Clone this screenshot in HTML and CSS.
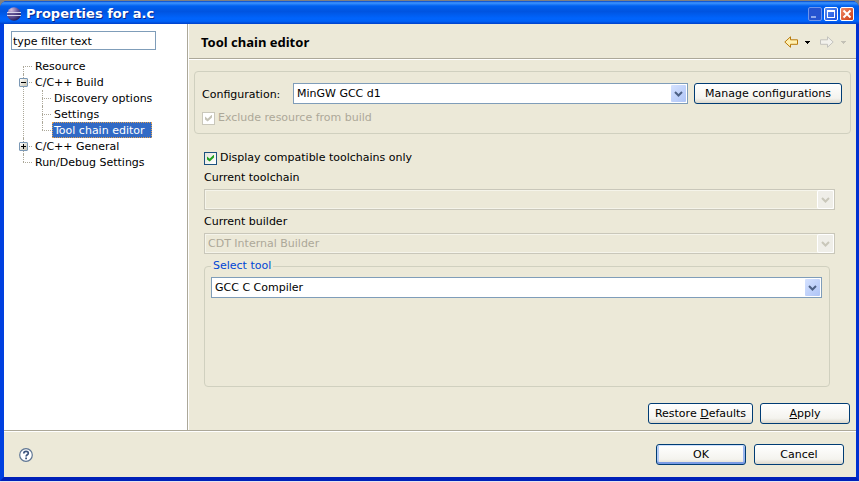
FILE: index.html
```html
<!DOCTYPE html>
<html lang="en">
<head>
<meta charset="utf-8">
<title>Properties for a.c</title>
<link rel="stylesheet" href="styles.css">
</head>
<body>
<div class="window">
  <header class="titlebar">
    <svg class="logo" width="16" height="16" viewBox="0 0 16 16" aria-hidden="true">
      <defs>
        <radialGradient id="globe" cx=".3" cy=".2" r=".9"><stop offset="0" stop-color="#d3bfdc"/><stop offset=".5" stop-color="#6d5b9f"/><stop offset="1" stop-color="#1b1650"/></radialGradient>
      </defs>
      <circle cx="8" cy="8" r="6.800" fill="url(#globe)"/>
      <path d="M1 6.500h14M1 9.500h14" stroke="#d8d4ea" stroke-width="1"/>
      <path d="M2 8h12.500" stroke="#35296f" stroke-width="1"/>
    </svg>
    <h1 class="title">Properties for a.c</h1>
    <div class="controls">
      <button class="control minimize" aria-label="Minimize" disabled><svg width="12" height="12" viewBox="0 0 12 12"><path d="M2 8h5v2H2z" fill="#8fa9ec"/></svg></button>
      <button class="control" aria-label="Maximize"><svg width="12" height="12" viewBox="0 0 12 12"><path d="M2 2h8v8H2zM3 4v5h6V4z" fill="#fff" fill-rule="evenodd"/></svg></button>
      <button class="control close" aria-label="Close"><svg width="12" height="12" viewBox="0 0 12 12"><path d="M2.500 2.500l7 7M9.500 2.500l-7 7" stroke="#fff" stroke-width="2"/></svg></button>
    </div>
  </header>
  <main class="content">
    <nav class="sidebar">
      <input class="filter" type="text" value="type filter text" aria-label="Filter">
      <ul class="tree">
        <li><span class="item">Resource</span></li>
        <li><button class="toggle minus" aria-label="Collapse C/C++ Build"></button><span class="item">C/C++ Build</span>
          <ul>
            <li><span class="item">Discovery options</span></li>
            <li><span class="item">Settings</span></li>
            <li><span class="item selected">Tool chain editor</span></li>
          </ul>
        </li>
        <li><button class="toggle plus" aria-label="Expand C/C++ General"></button><span class="item">C/C++ General</span></li>
        <li><span class="item">Run/Debug Settings</span></li>
      </ul>
    </nav>
    <section class="page">
      <div class="heading">
        <h2>Tool chain editor</h2>
        <div class="history">
          <button class="plain" aria-label="Back"><svg width="14" height="12" viewBox="0 0 14 12"><path d="M.8 6L6.500.8v3h7v4.500h-7v3z" fill="#fff0b0" stroke="#b87a0c"/></svg></button>
          <button class="plain" aria-label="Back history"><svg width="5" height="3" viewBox="0 0 5 3"><path d="M0 0h5v1H4v1H3v1H2V2H1V1H0z"/></svg></button>
          <button class="plain forward" aria-label="Forward" disabled><svg width="14" height="12" viewBox="0 0 14 12"><path d="M13.200 6L7.500.8v3h-7v4.500h7v3z" fill="#f2f1ec" stroke="#c3c2bd"/></svg></button>
          <button class="plain" aria-label="Forward history" disabled><svg width="5" height="3" viewBox="0 0 5 3"><path d="M0 0h5v1H4v1H3v1H2V2H1V1H0z" fill="#c3c1b6"/></svg></button>
        </div>
      </div>
      <div class="config">
        <div class="config-row">
          <label for="configuration">Configuration:</label>
          <div class="combo"><select id="configuration"><option>MinGW GCC d1</option></select><span class="arrow"><svg width="9" height="6" viewBox="0 0 9 6"><path d="M1 1l3.500 3.500L8 1" fill="none" stroke="#4d6185" stroke-width="2"/></svg></span></div>
          <button class="button manage">Manage configurations</button>
        </div>
        <label class="check off"><input type="checkbox" checked disabled>Exclude resource from build</label>
      </div>
      <div class="tools">
        <label class="check"><input type="checkbox" checked>Display compatible toolchains only</label>
        <label class="caption" for="toolchain">Current toolchain</label>
        <div class="combo off"><select id="toolchain" disabled><option></option></select><span class="arrow"><svg width="9" height="6" viewBox="0 0 9 6"><path d="M1 1l3.500 3.500L8 1" fill="none" stroke="#c9c7ba" stroke-width="2"/></svg></span></div>
        <label class="caption" for="builder">Current builder</label>
        <div class="combo off"><select id="builder" disabled><option>CDT Internal Builder</option></select><span class="arrow"><svg width="9" height="6" viewBox="0 0 9 6"><path d="M1 1l3.500 3.500L8 1" fill="none" stroke="#c9c7ba" stroke-width="2"/></svg></span></div>
        <fieldset>
          <legend>Select tool</legend>
          <div class="combo"><select aria-label="Select tool"><option>GCC C Compiler</option></select><span class="arrow"><svg width="9" height="6" viewBox="0 0 9 6"><path d="M1 1l3.500 3.500L8 1" fill="none" stroke="#4d6185" stroke-width="2"/></svg></span></div>
        </fieldset>
      </div>
      <div class="page-actions">
        <button class="button restore">Restore <u>D</u>efaults</button>
        <button class="button"><u>A</u>pply</button>
      </div>
    </section>
  </main>
  <footer class="footer">
    <button class="plain" aria-label="Help"><svg width="14" height="14" viewBox="0 0 14 14"><circle cx="7" cy="7" r="6.300" fill="#fff" stroke="#5f7694" stroke-width="1.200"/><path d="M4.800 5.400C4.800 2.600 9.400 2.700 9.300 5.200 9.300 6.800 7.100 6.700 7.100 8.600" fill="none" stroke="#3d557e" stroke-width="1.700"/><path d="M6.200 9.600h1.800v1.600H6.200z" fill="#3d557e"/></svg></button>
    <div class="dialog-actions">
      <button class="button primary">OK</button>
      <button class="button">Cancel</button>
    </div>
  </footer>
</div>
</body>
</html>
```
FILE: styles.css
```css
* { box-sizing: border-box; }

body {
  margin: 0;
  min-height: 100vh;
  padding: 1px 0;
  display: flex;
  background: linear-gradient(#808080 50%, #e4e4f0 50%);
  color: #000;
  font: 11px/16px "DejaVu Sans", Verdana, sans-serif;
}

button, input, select { font: inherit; color: inherit; }

.window {
  flex: 1;
  min-width: 0;
  display: flex;
  flex-direction: column;
  border: solid;
  border-width: 0 3px 4px 4px;
  border-color: #0046e0 #0030d0 #0020b8 #0040e0;
  border-radius: 7px 7px 0 0;
  background: #0054e3;
}

.titlebar {
  height: 23px;
  display: flex;
  align-items: center;
  gap: 4px;
  padding: 3px 5px 0 6px;
  margin: 0 -3px 0 -4px;
  border-radius: 7px 7px 0 0;
  background: linear-gradient(#0044c8 0, #3d95ff 8%, #0060ee 22%, #0054e0 45%, #0064fc 75%, #0062f8 88%, #0040c8 100%);
}

.title {
  flex: 1;
  margin: 0;
  color: #fff;
  font-size: 13px;
  line-height: 16px;
  text-shadow: 1px 1px #0a2a8c;
}

.controls { display: flex; gap: 2px; }

.control {
  width: 14px;
  height: 14px;
  padding: 0;
  display: grid;
  place-items: center;
  border: 1px solid #fff;
  border-radius: 2px;
  background: linear-gradient(135deg, #5a8df5, #1a50dc);
}

.control.minimize { border-color: #6f94ea; background: #2553d0; }
.control.close { background: linear-gradient(135deg, #f08a68, #cc3a10); }

.content {
  flex: 1;
  display: flex;
  min-height: 0;
  background: #ece9d8;
  border-bottom: 1px solid #aca899;
}

.sidebar {
  width: 184px;
  flex: none;
  padding: 7px;
  border-right: 1px solid #aca899;
  background: #fff;
}

.filter {
  display: block;
  width: 145px;
  height: 19px;
  padding: 1px 1px 0;
  border: 1px solid #7f9db9;
  border-radius: 0;
  outline: 0;
}

.tree, .tree ul { margin: 0; padding: 0; list-style: none; }
.tree { padding: 8px 0 0 9px; }
.tree ul { margin-left: 16px; }

.tree li { position: relative; padding-left: 15px; white-space: nowrap; }
.tree ul li { margin-left: -12px; }

.tree li::before {
  content: "";
  position: absolute;
  top: 0;
  bottom: 0;
  left: 3px;
  border-left: 1px dotted #aca899;
}

.tree > li:first-child::before { top: 8px; }
.tree li:last-child::before { bottom: auto; height: 8px; }

.tree li::after {
  content: "";
  position: absolute;
  top: 8px;
  left: 3px;
  width: 9px;
  border-top: 1px dotted #aca899;
}

.item { display: block; height: 16px; line-height: 18px; }
.tree .selected {
  width: max-content;
  padding: 0 7px 0 2px;
  margin-left: -2px;
  color: #fff;
  background: #316ac5;
  outline: 1px dotted #e0a050;
  outline-offset: -1px;
}

.toggle {
  position: absolute;
  z-index: 1;
  top: 4px;
  left: -1px;
  width: 9px;
  height: 9px;
  padding: 0;
  border: 1px solid #7b98b5;
  border-radius: 1px;
  background:
    linear-gradient(#000, #000) center / 5px 1px no-repeat,
    linear-gradient(135deg, #fff, #c8c3b0);
}

.toggle.plus {
  background:
    linear-gradient(#000, #000) center / 5px 1px no-repeat,
    linear-gradient(#000, #000) center / 1px 5px no-repeat,
    linear-gradient(135deg, #fff, #c8c3b0);
}

.page {
  flex: 1;
  min-width: 0;
  display: flex;
  flex-direction: column;
  border-left: 1px solid #fff;
}

.heading {
  height: 35px;
  flex: none;
  display: flex;
  align-items: center;
  justify-content: space-between;
  padding: 2px 10px 0 12px;
  border-bottom: 1px solid #aca899;
  box-shadow: 0 1px #fff;
}

.heading h2 {
  margin: 0;
  font: bold 13px/18px "Noto Sans", Tahoma, sans-serif;
}

.history { display: flex; align-items: center; gap: 7px; }
.forward { margin-left: 3px; }

.plain { display: block; padding: 0; border: 0; background: none; }
.plain svg { display: block; }

.config {
  margin: 12px 5px 0;
  padding: 11px 8px 7px 7px;
  border: 1px solid #d0d0bf;
  border-radius: 4px;
}

.config-row { display: flex; align-items: center; gap: 6px; margin-bottom: 6px; }
.config-row label { width: 85px; padding-top: 2px; }
.config-row .combo { flex: 1; }

.combo {
  display: flex;
  position: relative;
  height: 21px;
  border: 1px solid #7f9db9;
  background: #fff;
}

.combo select {
  flex: 1;
  min-width: 0;
  appearance: none;
  padding: 1px 20px 0 3px;
  border: 0;
  border-radius: 0;
  background: none;
  outline: 0;
  opacity: 1;
}

.arrow {
  position: absolute;
  top: 1px;
  right: 1px;
  bottom: 1px;
  width: 15px;
  display: grid;
  place-items: center;
  pointer-events: none;
  border-radius: 1px;
  background: linear-gradient(135deg, #d5e2ff, #aec4f6);
}

.combo.off { border-color: #c9c7ba; background: #ece9d8; box-shadow: inset 0 0 0 1px #f5f4ea; color: #aca899; }
.off .arrow { background: #efeee8; box-shadow: 0 0 0 1px #fff; }

.button {
  width: 90px;
  height: 21px;
  padding: 1px 0 0;
  border: 1px solid #003c74;
  border-radius: 3px;
  background: linear-gradient(#fff, #f4f3ee 75%, #dcd8cc);
  white-space: nowrap;
}

.manage { width: 148px; }
.restore { width: 105px; }
.primary { box-shadow: inset 0 1px #cee0fc, inset 0 -2px #7a9be4, inset 2px 0 #b4cbf4, inset -2px 0 #9ab6ee; }

.check { display: flex; align-items: center; gap: 3px; height: 16px; }
.check input {
  appearance: none;
  width: 13px;
  height: 13px;
  margin: 0;
  display: grid;
  place-items: center;
  border: 1px solid #1c5180;
  background: linear-gradient(135deg, #e4e4dc, #fff);
}

.check input::before {
  content: "";
  width: 7px;
  height: 7px;
  background: #21a121;
  clip-path: polygon(0 30%, 38% 60%, 100% 0, 100% 42%, 38% 100%, 0 70%);
}

.check.off { color: #aca899; }
.check.off input { border-color: #cac8bb; background: #fff; }
.check.off input::before { background: #c5c3b6; }

.tools { flex: 1; display: flex; flex-direction: column; padding: 16px 21px 0 15px; }
.caption { margin: 4px 0 3px; }

fieldset {
  flex: 1;
  min-width: 0;
  margin: 4px 5px 0 0;
  padding: 3px 7px 8px 6px;
  border: 1px solid #d0d0bf;
  border-radius: 4px;
}

legend { padding: 0 2px; color: #0046d5; }

.page-actions { display: flex; justify-content: flex-end; gap: 7px; padding: 16px 6px 6px 0; }

.footer {
  height: 46px;
  flex: none;
  display: flex;
  align-items: center;
  justify-content: space-between;
  padding: 0 12px 0 15px;
  border-top: 1px solid #fff;
  background: #ece9d8;
}

.dialog-actions { display: flex; gap: 8px; }
```
